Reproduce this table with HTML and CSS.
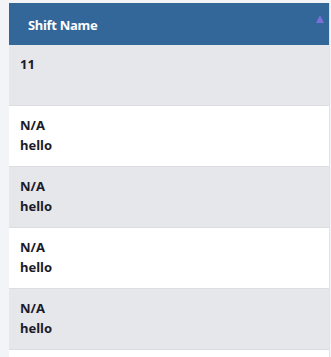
FILE: index.html
```html
<!DOCTYPE html>
<html>
<head>
<meta charset="utf-8">
<link rel="stylesheet" href="styles.css">
</head>
<body>
<div class="table">
  <div class="head">
    <span class="title">Shift Name</span>
    <span class="sort"></span>
  </div>
  <div class="row alt"><div class="l1">11</div><div class="l2">&nbsp;</div></div>
  <div class="row"><div class="l1">N/A</div><div class="l2">hello</div></div>
  <div class="row alt"><div class="l1">N/A</div><div class="l2">hello</div></div>
  <div class="row"><div class="l1">N/A</div><div class="l2">hello</div></div>
  <div class="row alt"><div class="l1">N/A</div><div class="l2">hello</div></div>
  <div class="row"></div>
</div>
</body>
</html>
```

FILE: styles.css
```css
html, body {
  margin: 0;
  padding: 0;
  background: #f3f4f8;
  overflow: hidden;
}
body {
  padding: 3px 0 0 9px;
  font-family: "Noto Sans", "Open Sans", sans-serif;
}
.table {
  width: 320px;
  border-right: 1px solid #dfe3ec;
}
.head {
  height: 42px;
  background: #336699;
  display: flex;
  align-items: center;
  justify-content: space-between;
  padding: 0 5px 0 19px;
  box-sizing: border-box;
}
.title {
  color: #ffffff;
  font-weight: 700;
  font-size: 13px;
  letter-spacing: -0.3px;
  margin-top: 1px;
}
.sort {
  width: 0;
  height: 0;
  border-left: 4px solid transparent;
  border-right: 4px solid transparent;
  border-bottom: 8px solid #7b6fd9;
  align-self: flex-start;
  margin-top: 12px;
}
.row {
  height: 61px;
  box-sizing: border-box;
  background: #ffffff;
  border-bottom: 1px solid #dcdde2;
  padding: 9px 0 0 11px;
  color: #1b1b2b;
  font-weight: 700;
  font-size: 13px;
  line-height: 20px;
}
.row.alt {
  background: #e6e7eb;
}
```
